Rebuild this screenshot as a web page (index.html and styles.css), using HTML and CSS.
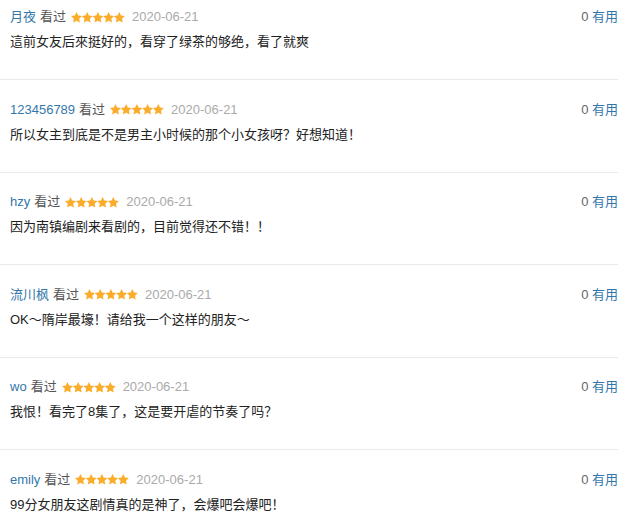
FILE: index.html
```html
<!DOCTYPE html>
<html lang="zh-CN">
<head>
    <meta charset="UTF-8">
    <meta name="viewport" content="width=device-width, initial-scale=1.0">
    <title>短评</title>
    <link rel="stylesheet" href="styles.css">
</head>
<body>
    <div class="comments" id="comments"></div>

    <script>
        const comments = [
            { user: '月夜', text: '這前女友后來挺好的，看穿了绿茶的够绝，看了就爽' },
            { user: '123456789', text: '所以女主到底是不是男主小时候的那个小女孩呀？好想知道！' },
            { user: 'hzy', text: '因为南镇编剧来看剧的，目前觉得还不错！！' },
            { user: '流川枫', text: 'OK～隋岸最壕！请给我一个这样的朋友～' },
            { user: 'wo', text: '我恨！看完了8集了，这是要开虐的节奏了吗？' },
            { user: 'emily', text: '99分女朋友这剧情真的是神了，会爆吧会爆吧！' }
        ];

        const star = '<polygon points="5.5,0 7.2,3.5 11,4 8.2,6.7 8.9,10.6 5.5,8.7 2.1,10.6 2.8,6.7 0,4 3.8,3.5"/>';

        function stars() {
            let g = '';
            for (let i = 0; i < 5; i++) {
                g += `<g transform="translate(${i * 10.7},0)">${star}</g>`;
            }
            return `<svg class="stars" width="54" height="11" viewBox="0 0 54 11">${g}</svg>`;
        }

        const list = document.getElementById('comments');
        comments.forEach(c => {
            const item = document.createElement('div');
            item.className = 'comment';
            item.innerHTML = `
                <div class="comment-info">
                    <div class="meta">
                        <a class="user" href="#">${c.user}</a>
                        <span class="watched">看过</span>
                        ${stars()}
                        <span class="date">2020-06-21</span>
                    </div>
                    <div class="votes"><span class="count">0</span> <a class="useful" href="#">有用</a></div>
                </div>
                <p class="text">${c.text}</p>`;
            list.appendChild(item);
        });
    </script>
</body>
</html>
```

FILE: styles.css
```css
body {
    font-family: "Liberation Sans", Arial, "Noto Sans CJK SC", sans-serif;
    font-size: 13px;
    margin: 0;
    padding: 0;
    background: #fff;
    color: #333;
}

.comments {
    width: 618px;
}

.comment {
    padding: 7px 0 27px 10px;
    margin-bottom: 12.5px;
    border-bottom: 1px solid #eaeaea;
}

.comment-info {
    display: flex;
    justify-content: space-between;
    align-items: center;
    line-height: 20px;
}

.meta {
    display: flex;
    align-items: center;
}

.user {
    color: #3377aa;
    text-decoration: none;
    margin-right: 4px;
}

.watched {
    color: #555;
    margin-right: 5px;
}

.stars {
    fill: #fcac2b;
    margin-right: 7px;
}

.date {
    color: #aaa;
}

.votes {
    color: #666;
}

.useful {
    color: #3377aa;
    text-decoration: none;
}

.text {
    margin: 5px 0 0;
    line-height: 20px;
    color: #222;
}
```
